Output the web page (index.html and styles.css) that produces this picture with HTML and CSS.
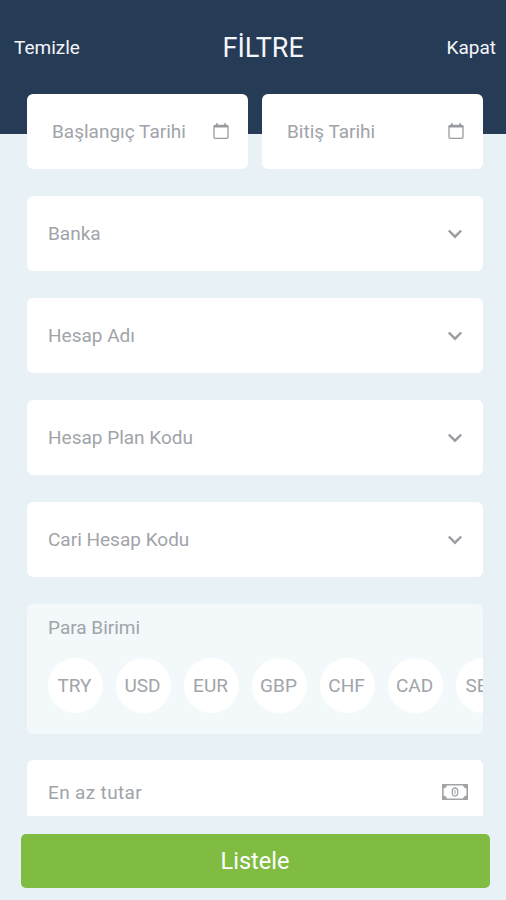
FILE: index.html
```html
<!DOCTYPE html>
<html lang="tr">
<head>
<meta charset="utf-8">
<title>Filtre</title>
<link rel="stylesheet" href="styles.css">
</head>
<body>
<svg class="defs" width="0" height="0">
  <symbol id="calendar" viewBox="0 0 18 18"><path d="M3.200 3.500h11.600q1.200 0 1.200 1.200v10.400q0 1.200-1.200 1.200H3.200Q2 16.300 2 15.100V4.700q0-1.200 1.200-1.200z" fill="none" stroke="currentColor" stroke-width="1.300"/><path d="M1.800 3.200h14.400v2.400H1.800zM4 1.300h1.800V4H4zM12.200 1.300H14V4h-1.800z" fill="currentColor"/></symbol>
  <symbol id="chevron" viewBox="0 0 16 10"><path d="M1.800 1.500 8 7.700l6.200-6.200" fill="none" stroke="currentColor" stroke-width="2.400"/></symbol>
  <symbol id="cash" viewBox="0 0 26 16"><path d="M.8.8h24.400v14.400H.8z" fill="none" stroke="currentColor" stroke-width="1.600"/><path d="M1 1h4Q4.500 4.200 1 4.500zM25 1h-4q.5 3.200 4 3.500zM1 15h4q-.5-3.200-4-3.500zM25 15h-4q.5-3.200 4-3.500z" fill="currentColor"/><ellipse cx="13" cy="8" rx="2.800" ry="4" fill="none" stroke="currentColor" stroke-width="1.300"/><path d="M13 6v4" stroke="currentColor" stroke-width="1"/></symbol>
</svg>
<div class="screen">
  <header class="header">
    <span class="action">Temizle</span>
    <h1 class="title">FİLTRE</h1>
    <span class="action">Kapat</span>
  </header>
  <main class="filters">
    <div class="dates">
      <div class="field date"><span>Başlangıç Tarihi</span><svg class="calendar"><use href="#calendar"/></svg></div>
      <div class="field date"><span>Bitiş Tarihi</span><svg class="calendar"><use href="#calendar"/></svg></div>
    </div>
    <div class="field"><span>Banka</span><svg class="chevron"><use href="#chevron"/></svg></div>
    <div class="field"><span>Hesap Adı</span><svg class="chevron"><use href="#chevron"/></svg></div>
    <div class="field"><span>Hesap Plan Kodu</span><svg class="chevron"><use href="#chevron"/></svg></div>
    <div class="field"><span>Cari Hesap Kodu</span><svg class="chevron"><use href="#chevron"/></svg></div>
    <section class="currency">
      <div class="label">Para Birimi</div>
      <div class="chips">
        <span class="chip">TRY</span><span class="chip">USD</span><span class="chip">EUR</span><span class="chip">GBP</span><span class="chip">CHF</span><span class="chip">CAD</span><span class="chip">SEK</span>
      </div>
    </section>
    <div class="field amount"><span>En az tutar</span><svg class="cash"><use href="#cash"/></svg></div>
  </main>
  <footer class="footer"><button class="submit">Listele</button></footer>
</div>
</body>
</html>
```
FILE: styles.css
```css
* { box-sizing: border-box; }
body { margin: 0; font-family: Roboto, "Liberation Sans", sans-serif; }
.defs { display: block; }
.screen { height: 900px; display: flex; flex-direction: column; overflow: hidden; background: #e8f1f6; }
.header { flex: none; height: 134px; padding: 1px 10px 39px 14px; display: flex; justify-content: space-between; align-items: center; background: #263c56; color: #f4f6fa; }
.action { padding-bottom: 2px; font-size: 19px; }
.title { margin: 0; font-size: 27px; font-weight: 400; }
.filters { flex: none; height: 722px; margin-top: -40px; padding: 0 23px 0 27px; display: flex; flex-direction: column; gap: 27px; overflow: hidden; }
.dates { display: grid; grid-template-columns: 1fr 1fr; gap: 14px; }
.field { flex: none; height: 75px; padding: 0 20px 1px 21px; display: flex; align-items: center; justify-content: space-between; background: #fff; border-radius: 6px; color: #a0a4a9; font-size: 19px; }
.date { padding: 0 18px 1px 25px; }
.calendar { width: 18px; height: 18px; color: #989ba0; }
.chevron { width: 16px; height: 10px; margin-top: 1px; color: #999ca0; }
.currency { flex: none; height: 130px; padding: 12px 0 0 21px; overflow: hidden; border-radius: 6px; background: #f3f8fa; color: #a0a4a9; font-size: 19px; }
.label { line-height: 24px; }
.chips { display: flex; gap: 13px; margin-top: 18px; }
.chip { flex: none; width: 55px; height: 55px; padding: 0 2px 1px 0; display: grid; place-items: center; border-radius: 50%; background: #fff; }
.amount { margin-top: -1px; height: 64px; padding: 0 15px 0 21px; letter-spacing: .35px; }
.cash { width: 26px; height: 16px; color: #a0a4a9; }
.footer { padding: 18px 16px 0 21px; }
.submit { display: block; width: 100%; height: 54px; padding: 0 1px 0 0; border: 0; border-radius: 5px; background: #80bc42; color: #fff; font: 400 23.500px Roboto, "Liberation Sans", sans-serif; }
```
